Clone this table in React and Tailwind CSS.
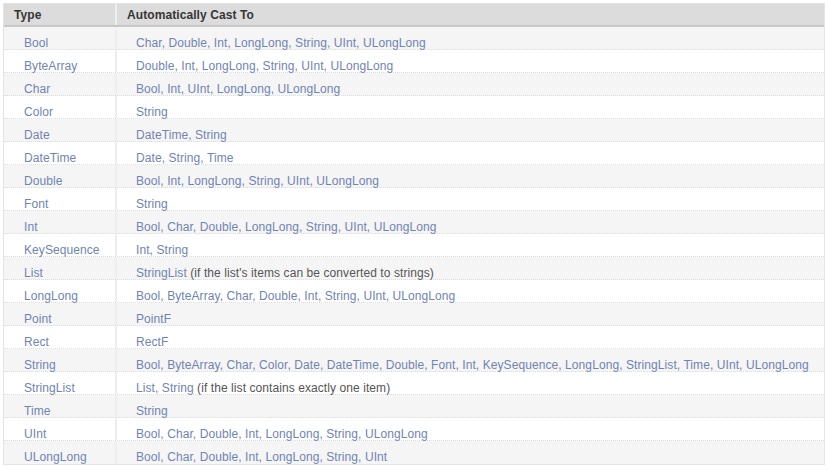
import React from "react";

const rows = [
  ["Bool", "Char, Double, Int, LongLong, String, UInt, ULongLong"],
  ["ByteArray", "Double, Int, LongLong, String, UInt, ULongLong"],
  ["Char", "Bool, Int, UInt, LongLong, ULongLong"],
  ["Color", "String"],
  ["Date", "DateTime, String"],
  ["DateTime", "Date, String, Time"],
  ["Double", "Bool, Int, LongLong, String, UInt, ULongLong"],
  ["Font", "String"],
  ["Int", "Bool, Char, Double, LongLong, String, UInt, ULongLong"],
  ["KeySequence", "Int, String"],
  ["List", "StringList", " (if the list's items can be converted to strings)"],
  ["LongLong", "Bool, ByteArray, Char, Double, Int, String, UInt, ULongLong"],
  ["Point", "PointF"],
  ["Rect", "RectF"],
  ["String", "Bool, ByteArray, Char, Color, Date, DateTime, Double, Font, Int, KeySequence, LongLong, StringList, Time, UInt, ULongLong"],
  ["StringList", "List, String", " (if the list contains exactly one item)"],
  ["Time", "String"],
  ["UInt", "Bool, Char, Double, Int, LongLong, String, ULongLong"],
  ["ULongLong", "Bool, Char, Double, Int, LongLong, String, UInt"],
];

export default function App() {
  return (
    <div className="w-[829px] h-[470px] bg-white pt-[3px] pl-[3px]" style={{ fontFamily: '"Liberation Sans", Arial, sans-serif' }}>
      <div className="w-[822px] border border-[#e4e4e4] text-[12px] leading-[14px] tracking-[0.08px]">
        <div className="flex h-[23px] bg-[#dcdcdc] border-b-2 border-[#c8c8c8] font-bold text-[#363636]">
          <div className="w-[113px] pl-[10px] pt-[4px] border-r-2 border-[#eeeeee]">Type</div>
          <div className="flex-1 pl-[10px] pt-[4px]">Automatically Cast To</div>
        </div>
        {rows.map(([t, c, extra], i) => (
          <div
            key={t}
            className={`flex h-[23px] ${i % 2 === 0 ? "bg-[#f5f5f5]" : "bg-white"} ${i < rows.length - 1 ? "border-b border-dotted border-[#dddddd]" : ""}`}
          >
            <div className="w-[113px] pl-[20px] pt-[10px] leading-[12px] border-r-2 border-[#eeeeee] text-[#7084b4]">{t}</div>
            <div className="flex-1 pl-[19px] pt-[10px] leading-[12px] whitespace-nowrap">
              <span className="text-[#7084b4]">{c}</span>
              {extra ? <span className="text-[#555555]">{extra}</span> : null}
            </div>
          </div>
        ))}
      </div>
    </div>
  );
}
